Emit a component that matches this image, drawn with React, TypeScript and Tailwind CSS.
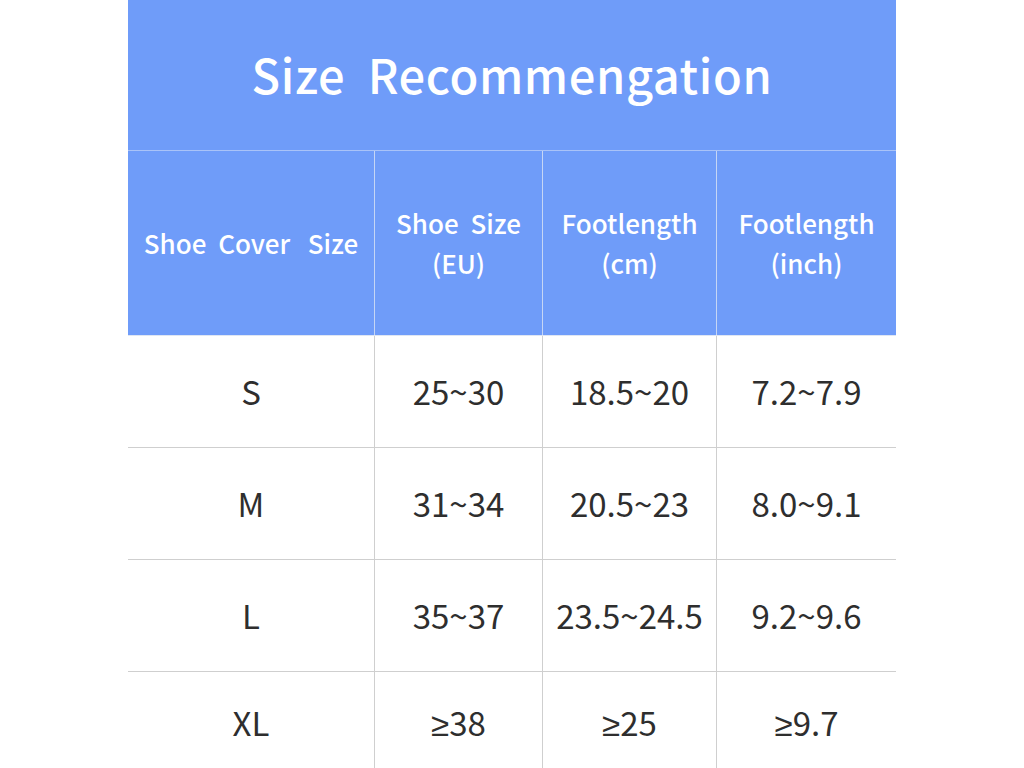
import React from 'react';

const head = [
    ['Shoe  Cover   Size'],
    ['Shoe  Size', '(EU)'],
    ['Footlength', '(cm)'],
    ['Footlength', '(inch)'],
];

const rows = [
    ['S', '25~30', '18.5~20', '7.2~7.9'],
    ['M', '31~34', '20.5~23', '8.0~9.1'],
    ['L', '35~37', '23.5~24.5', '9.2~9.6'],
    ['XL', '≥38', '≥25', '≥9.7'],
];

const cols = 'grid grid-cols-[247px_168px_174px_179px] shrink-0';

function Cell({ text }: { text: string }) {
    // the CJK font draws ≥ slanted, the picture has the plain one
    if (text.startsWith('≥')) {
        return (
            <span>
                <span style={{ fontFamily: '"Noto Sans", sans-serif' }}>≥</span>
                {text.slice(1)}
            </span>
        );
    }
    return <span>{text}</span>;
}

export default function App() {
    return (
        <div className="w-[1024px] h-[768px] bg-white overflow-hidden flex justify-center" style={{ fontFamily: '"Noto Sans CJK SC", "Noto Sans", sans-serif' }}>
            <div className="w-[768px] flex flex-col">
                <div className="h-[151px] shrink-0 bg-[#6f9cf9] border-b border-[#a9c3f8] flex items-center justify-center pb-[2px]">
                    <h1 className="text-[47px] font-medium text-white whitespace-pre tracking-[0.6px]">Size  Recommengation</h1>
                </div>
                <div className={`${cols} h-[185px] bg-[#6f9cf9] border-b border-[#dfe6f3]`}>
                    {head.map((h, i) => (
                        <div key={i} className={`flex flex-col items-center justify-center text-white text-[26px] font-medium leading-[40px] whitespace-pre ${i < 3 ? 'border-r border-[#c6d6f5]' : ''}`}>
                            {h.map((t) => (
                                <span key={t}>{t}</span>
                            ))}
                        </div>
                    ))}
                </div>
                {rows.map((r, ri) => (
                    <div key={ri} className={`${cols} ${ri < 3 ? 'h-[112px] border-b border-[#cfcfcf]' : 'h-[102px]'}`}>
                        {r.map((c, ci) => (
                            <div key={ci} className={`flex items-center justify-center text-[33px] text-[#2e2e2e] ${ci < 3 ? 'border-r border-[#cfcfcf]' : ''}`}>
                                <Cell text={c} />
                            </div>
                        ))}
                    </div>
                ))}
            </div>
        </div>
    );
}
